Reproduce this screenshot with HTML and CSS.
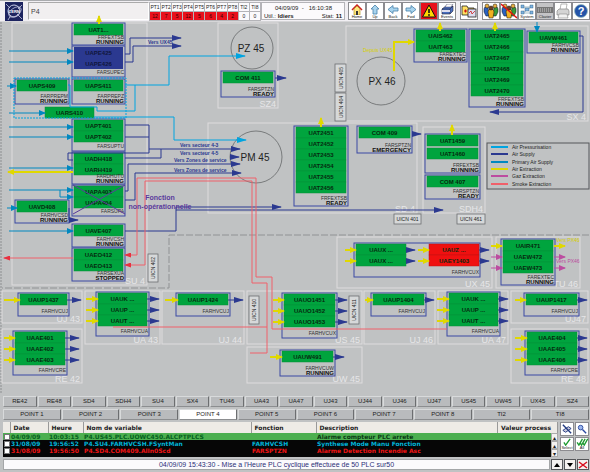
FILE: index.html
```
<!DOCTYPE html>
<html lang="fr">
<head>
  <meta charset="UTF-8" />
  <meta name="viewport" content="width=device-width, initial-scale=1.0" />
  <title>Supervision ventilation - P4</title>
  <link rel="stylesheet" href="styles.css">
</head>
<body>
  <header class="topbar">
    <svg class="logo" viewBox="0 0 18 19">
      <rect width="18" height="19" fill="#1d2460"/>
      <g fill="none" stroke="#c9cde6">
        <circle cx="9" cy="9" r="6"/>
        <ellipse cx="10" cy="10" rx="7" ry="4" transform="rotate(-35 10 10)" stroke-width=".7"/>
        <path d="M1 2 L5 6 M17 3 L13 7 M3 18 L6 13 M17 17 L12 12" stroke-width=".8"/>
      </g>
      <text x="9" y="11" text-anchor="middle" class="logo-text">CERN</text>
    </svg>
    <input class="page-name" type="text" value="P4" aria-label="Synoptique">
    <table class="alarms">
      <tr><th>PT1</th><th>PT2</th><th>PT3</th><th>PT4</th><th>PT5</th><th>PT6</th><th>PT7</th><th>PT8</th><th>TI2</th><th>TI8</th></tr>
      <tr><td class="on">12</td><td class="on">7</td><td class="on">5</td><td class="on">12</td><td class="on">5</td><td class="on">6</td><td class="on">4</td><td class="on">2</td><td>0</td><td>0</td></tr>
    </table>
    <div class="session">
      <div class="clock">04/09/09 &nbsp;- &nbsp; 16:10:38</div>
      <div class="user"><span>Util.: <b>ldiers</b></span><span>Stat: <b>11</b></span></div>
    </div>
    <nav class="toolbar">
      <button type="button">
        <svg viewBox="0 0 16 11"><path d="M3 6 L8 1 L13 6" fill="none" stroke="#c22" stroke-width="1.5"/><path d="M5 5 L8 2 L11 5 V11 H5Z" fill="#ffe680" stroke="#a80" stroke-width=".6"/><rect x="7" y="7" width="2" height="4" fill="#333"/></svg>
        <span>Home</span>
      </button>
      <button type="button">
        <svg viewBox="0 0 16 11"><path d="M8 1 L12 5 H10 V10 H6 V5 H4Z" class="nav-arrow"/></svg>
        <span>Up</span>
      </button>
      <button type="button">
        <svg viewBox="0 0 16 11"><path d="M3 5.500 L8 1.500 V4 H13 V7 H8 V9.500Z" class="nav-arrow"/></svg>
        <span>Back</span>
      </button>
      <button type="button">
        <svg viewBox="0 0 16 11"><path d="M13 5.500 L8 1.500 V4 H3 V7 H8 V9.500Z" class="nav-arrow"/></svg>
        <span>Fwd</span>
      </button>
      <button type="button" class="alert" aria-label="Alarmes">
        <svg viewBox="0 0 16 16"><path d="M8 2 L14.500 14 H1.500Z" fill="#ffd800" stroke="#111" stroke-width="1" stroke-linejoin="round"/><path d="M8 6 V10" stroke="#111" stroke-width="1.600"/><circle cx="8" cy="12" r=".9" fill="#111"/></svg>
      </button>
      <button type="button">
        <svg viewBox="0 0 16 11"><path d="M3 5 L7 2 H14 V7 L11 10 H3Z" fill="#4a6fc0" stroke="#223" stroke-width=".6"/><path d="M3 5 H11 L14 2 M11 5 V10" fill="none" stroke="#223" stroke-width=".6"/><path d="M6 3 L8 0 H14 L12 3Z" fill="#fff" stroke="#446" stroke-width=".5"/><rect x="3" y="6" width="8" height="2" fill="#dde"/></svg>
        <span>Events</span>
      </button>
      <button type="button" class="gap" aria-label="Dossiers">
        <svg viewBox="0 0 16 16"><path d="M1 3 H6 L7 5 H13 V12 H1Z" fill="#ffe060" stroke="#222" stroke-width=".8"/><path d="M3 8 H6 M4.500 6.500 V9.500" stroke="#d01010" stroke-width="1.200"/><rect x="7" y="6" width="8" height="8" fill="#dde" stroke="#222" stroke-width=".8"/><path d="M8 10 L10 8 L11 11 L14 8" fill="none" stroke="#c22" stroke-width=".8"/></svg>
      </button>
      <button type="button" class="gap" aria-label="Utilisateurs">
        <svg viewBox="0 0 16 16"><use href="#people"/></svg>
      </button>
      <button type="button" aria-label="Deconnexion">
        <svg viewBox="0 0 16 16"><use href="#people"/><path d="M0 1 L16 15" stroke="#e01010" stroke-width="1.500"/></svg>
      </button>
      <button type="button">
        <svg viewBox="0 0 16 11"><path d="M4 3 L12 3 L4 9 H12" fill="none" stroke="#8ab" stroke-width=".8"/><g fill="#7fb2e0" stroke="#257" stroke-width=".4"><rect x="2" y="1" width="3" height="3"/><rect x="11" y="1" width="3" height="3"/><rect x="6" y="4" width="4" height="3"/><rect x="2" y="7" width="3" height="3"/><rect x="11" y="7" width="3" height="3"/></g></svg>
        <span>System</span>
      </button>
      <button type="button" class="flat">
        <svg viewBox="0 0 16 11"><rect x="0" y="3" width="16" height="6" fill="#777"/><path d="M1 5 H15 M1 7 H15" stroke="#ccc" stroke-dasharray="1 1"/></svg>
        <span>Clavier</span>
      </button>
      <button type="button" aria-label="Imprimer">
        <svg viewBox="0 0 16 16"><path d="M5 7 L6 1 H12 L11 7Z" fill="#fff" stroke="#888" stroke-width=".6"/><path d="M2 8 L4 6 H13 L14 8 V12 H2Z" fill="#d4d4d4" stroke="#777" stroke-width=".6"/><path d="M4 11 H12 L13 15 H3Z" fill="#f2f2f2" stroke="#888" stroke-width=".6"/></svg>
      </button>
      <button type="button" aria-label="Aide">
        <svg viewBox="0 0 16 16"><circle cx="8" cy="8" r="6.500" fill="#2454a8" stroke="#9bb" stroke-width=".8"/><text x="8" y="12" text-anchor="middle" class="help-mark">?</text></svg>
      </button>
    </nav>
  </header>

  <main>
    <svg class="synoptic" viewBox="0 22 590 372">
      <defs>
        <g id="people" stroke="#111" stroke-width=".5">
          <path d="M1 6 Q1 4 3 4 H5 L6 13 H3 L1 9Z" fill="#2b62c0"/><circle cx="4" cy="3" r="2" fill="#e8b040"/>
          <path d="M15 6 Q15 4 13 4 H11 L10 13 H13 L15 9Z" fill="#3a9a3a"/><circle cx="12" cy="3" r="2" fill="#e8b040"/>
          <path d="M5 9 Q5 6 8 6 Q11 6 11 9 L10 15 H6Z" fill="#f0b020"/><circle cx="8" cy="5" r="2" fill="#704020"/>
        </g>
        <marker id="head-supply" class="head supply" viewBox="0 0 10 6" refX="9" refY="3" markerWidth="10" markerHeight="6" markerUnits="userSpaceOnUse" orient="auto"><path d="M0 0 L10 3 L0 6Z"/></marker>
        <marker id="head-press" class="head press" viewBox="0 0 10 6" refX="9" refY="3" markerWidth="10" markerHeight="6" markerUnits="userSpaceOnUse" orient="auto"><path d="M0 0 L10 3 L0 6Z"/></marker>
        <marker id="head-primary" class="head primary" viewBox="0 0 7 6" refX="6" refY="3" markerWidth="7" markerHeight="6" markerUnits="userSpaceOnUse" orient="auto"><path d="M0 0 L7 3 L0 6Z"/></marker>
        <marker id="head-extract" class="head extract" viewBox="0 0 7 6" refX="6" refY="3" markerWidth="7" markerHeight="6" markerUnits="userSpaceOnUse" orient="auto"><path d="M0 0 L7 3 L0 6Z"/></marker>
        <marker id="head-gas" class="head gas" viewBox="0 0 7 6" refX="6" refY="3" markerWidth="7" markerHeight="6" markerUnits="userSpaceOnUse" orient="auto"><path d="M0 0 L7 3 L0 6Z"/></marker>
        <marker id="head-smoke" class="head smoke" viewBox="0 0 7 5" refX="6" refY="2.500" markerWidth="7" markerHeight="5" markerUnits="userSpaceOnUse" orient="auto"><path d="M0 0 L7 2.500 L0 5Z"/></marker>
      </defs>

      <path class="frame" d="M1 22 V394"/>
      <path class="ground" d="M589 235 H169 V288 H2"/>
      <g id="areas"></g>

      <circle class="shaft" cx="252" cy="48" r="21"/>
      <circle class="shaft" cx="256" cy="157" r="26"/>
      <circle class="shaft" cx="381" cy="81" r="24"/>
      <text class="shaft-name" x="251" y="52">PZ 45</text>
      <text class="shaft-name" x="255" y="161">PM 45</text>
      <text class="shaft-name" x="382" y="85">PX 46</text>

      <g id="units"></g>

      <!-- primary air -->
      <g class="pipe primary">
        <path d="M9 51 H73"/><path d="M9 62 H73"/><path d="M7 86 H16"/><path d="M9 113 H45"/>
        <path d="M9 127 H73"/><path d="M9 137 H73"/><path d="M9 168 H73"/><path d="M9 190 H73"/>
        <path d="M60 190 V197 H73"/><path d="M7 208 H17"/><path d="M9 231 H73"/><path d="M537 22 V32"/>
      </g>

      <!-- pressurisation -->
      <rect class="press-zone" x="14" y="78" width="112" height="40"/>
      <g class="pipe press">
        <path d="M125 85 H169 V56 H245"/>
        <path d="M94 117 H174 V140 H246"/>
      </g>
      <path class="pipe press plain" d="M68 85 H70 V107 H97 V111 H135 V85"/>

      <!-- supply -->
      <g class="pipe supply">
        <path d="M125 54 H130 V38 H181"/><path d="M125 62 H133 V46 H181"/>
        <path d="M149 149 H240"/><path d="M230 157 H239"/>
        <path d="M125 191 H128 V164 H240"/><path d="M125 200 H135 V173 H241"/>
        <path d="M69 208 V220 H78"/><path d="M125 231 H176 V207 H281"/><path d="M176 210 H443"/>
        <path d="M275 78 H286"/><path d="M412 134 H421"/><path d="M579 36 H583 V112 H490"/>
      </g>
      <g class="pipe supply plain">
        <path d="M125 125 H149 V153 H68 V160 H73"/><path d="M125 137 H149"/><path d="M125 158 H161 V149"/>
      </g>

      <!-- extraction -->
      <g class="pipe extract">
        <path d="M99 24 V16"/><path d="M440 31 V23"/><path d="M495 31 V23"/><path d="M321 127 V118"/>
        <path d="M452 135 V125"/><path d="M73 172 H8"/><path d="M394 71 V42 H414"/>
      </g>

      <!-- smoke -->
      <g class="pipe smoke">
        <path d="M73 258 H4"/><path d="M137 255 H125"/><path d="M145 265 H125"/>
      </g>
      <g class="pipe smoke plain">
        <path d="M137 255 V178 H256 V277 H272 V329 H447"/>
        <path d="M145 265 V181 H252 V283 H267 V353 H250"/>
        <path d="M113 327 H267"/>
      </g>

      <path class="crossed" d="M73 185 L125 214 M125 185 L73 214"/>

      <g class="note">
        <text x="148" y="44">Vers UX45</text>
        <text x="180" y="147">Vers secteur 4-3</text>
        <text x="180" y="155">Vers secteur 4-5</text>
        <text x="174" y="162">Vers Zones de service</text>
        <text x="174" y="172">Vers Zones de service</text>
      </g>
      <text class="note-extract" x="363" y="52">Depuis UX45</text>
      <text class="note-extract" x="556" y="242">Vers PX46</text>
      <text class="note-gas" x="556" y="263">Vers PX46</text>
      <text class="warning" x="160" y="200">Fonction</text>
      <text class="warning" x="160" y="209">non-opérationnelle</text>

      <g id="tags"></g>

      <g class="legend">
        <rect x="487" y="143" width="102" height="46"/>
        <path class="press" d="M491 147 H508"/><text x="512" y="149">Air Pressurisation</text>
        <path class="supply" d="M491 154 H508"/><text x="512" y="156">Air Supply</text>
        <path class="primary" d="M491 162 H508"/><text x="512" y="164">Primary Air Supply</text>
        <path class="extract" d="M491 169 H508"/><text x="512" y="171">Air Extraction</text>
        <path class="gas" d="M491 176 H508"/><text x="512" y="178">Gaz Extraction</text>
        <path class="smoke" d="M491 184 H508"/><text x="512" y="186">Smoke Extraction</text>
      </g>
    </svg>

    <nav class="tabs">
      <button type="button">RE42</button><button type="button">RE48</button><button type="button">SD4</button><button type="button">SDH4</button><button type="button">SU4</button><button type="button">SX4</button><button type="button">TU46</button><button type="button">UA43</button><button type="button">UA47</button><button type="button">UJ43</button><button type="button">UJ44</button><button type="button">UJ46</button><button type="button">UJ47</button><button type="button">US45</button><button type="button">UW45</button><button type="button">UX45</button><button type="button">SZ4</button>
    </nav>
    <nav class="tabs">
      <button type="button">POINT 1</button><button type="button">POINT 2</button><button type="button">POINT 3</button><button type="button" class="active">POINT 4</button><button type="button">POINT 5</button><button type="button">POINT 6</button><button type="button">POINT 7</button><button type="button">POINT 8</button><button type="button">TI2</button><button type="button">TI8</button>
    </nav>
  </main>

  <section class="events">
    <div class="events-list">
      <table>
        <colgroup><col class="c-check"><col class="c-date"><col class="c-hour"><col class="c-name"><col class="c-func"><col class="c-desc"><col class="c-value"></colgroup>
        <thead>
          <tr><th></th><th>Date</th><th>Heure</th><th>Nom de variable</th><th>Fonction</th><th>Description</th><th>Valeur process</th></tr>
        </thead>
        <tbody>
          <tr class="ack"><td><input type="checkbox" aria-label="Alarme 1"></td><td>04/09/09</td><td>10:03:15</td><td>P4.US45.PLC.UOWC450.ALCPTPLCS</td><td></td><td>Alarme compteur PLC arrete</td><td></td></tr>
          <tr class="info"><td><input type="checkbox" aria-label="Alarme 2"></td><td>31/08/09</td><td>19:56:52</td><td>P4.SU4.FARHVCSH.FSyntMan</td><td>FARHVCSH</td><td>Synthese Mode Manu Fonction</td><td></td></tr>
          <tr class="fault"><td><input type="checkbox" aria-label="Alarme 3"></td><td>31/08/09</td><td>19:56:50</td><td>P4.SD4.COM409.AlIn0Scd</td><td>FARSPTZN</td><td>Alarme Detection Incendie Asc</td><td></td></tr>
        </tbody>
      </table>
      <div class="scroll"><button type="button">▴</button><button type="button">▴</button><button type="button">▾</button></div>
    </div>
    <div class="events-tools">
      <button type="button" aria-label="Masquer"><svg viewBox="0 0 13 13"><path d="M2 8 L8 4 L11 6 L5 10Z" fill="#ccd" stroke="#223a80"/><path d="M2 2 L11 11" stroke="#223a80" stroke-width="1.500"/></svg></button>
      <button type="button" aria-label="Chercher"><svg viewBox="0 0 13 13"><circle cx="5" cy="5" r="2.500" fill="#9db8ee" stroke="#2848a0"/><path d="M7 7 L11 11" stroke="#2848a0" stroke-width="1.500"/></svg></button>
      <button type="button"><svg viewBox="0 0 13 9"><path d="M3 5 L5 8 L10 1" class="tick"/></svg><span>Select</span></button>
      <button type="button"><svg viewBox="0 0 13 9"><path d="M1 5 L3 8 L7 1 M4 5 L6 8 L10 1 M7 5 L9 8 L13 1" class="tick"/></svg><span>All</span></button>
    </div>
  </section>

  <footer class="status">
    <output>04/09/09 15:43:30 - Mise a l'Heure PLC cyclique effectuee de 50 PLC sur50</output>
    <button type="button" aria-label="Precedent"><svg viewBox="0 0 10 8"><path d="M5 2 L8 6 H2Z"/></svg></button>
    <button type="button" aria-label="Suivant"><svg viewBox="0 0 10 8"><path d="M5 6 L8 2 H2Z"/></svg></button>
    <button type="button" aria-label="Effacer"><svg viewBox="0 0 10 8"><path d="M1 1 L9 7 M9 1 L1 7" stroke="#d81020" stroke-width="1.500"/></svg></button>
  </footer>

  <script src="script.js"></script>
</body>
</html>
```
FILE: styles.css
```
* {
  box-sizing: border-box;
}

body {
  margin: 0;
  background: #c0c2c3;
  color: #222;
  font-family: "Liberation Sans", Arial, sans-serif;
  font-size: 6px;
}

button {
  font: inherit;
  color: inherit;
  padding: 0;
  margin: 0;
  border-radius: 0;
  cursor: pointer;
}

/* top bar */
.topbar {
  display: flex;
  align-items: center;
  height: 22px;
  padding-left: 5px;
  background: #f1eff3;
  border-top: 1px solid #a9abae;
  border-bottom: 1px solid #d6d6d8;
}

.logo {
  width: 18px;
  height: 19px;
  margin-right: 5px;
}

.logo-text {
  font-size: 4px;
  font-weight: bold;
  fill: #fff;
}

.page-name {
  flex: 1;
  min-width: 0;
  height: 18px;
  padding: 0 2px;
  border: 1px solid #fff;
  border-top-color: #aaa;
  border-left-color: #aaa;
  background: #f1eff0;
  color: #444;
  font-family: inherit;
  font-size: 7px;
}

.alarms {
  width: 112px;
  table-layout: fixed;
  border-collapse: collapse;
  font-size: 5px;
  text-align: center;
}

.alarms th,
.alarms td {
  height: 9px;
  padding: 0;
  border: 1px solid #b4b4b8;
  font-weight: normal;
  background: #fbfafc;
}

.alarms .on {
  background: #e8101c;
  color: #300;
}

.session {
  width: 84px;
  height: 18px;
  padding: 1px 2px;
  line-height: 8px;
  background: #fbfafc;
  border: 1px solid #b4b4b8;
}

.clock {
  padding-left: 11px;
  white-space: pre;
}

.user {
  display: flex;
  justify-content: space-between;
}

.toolbar {
  display: flex;
  margin-left: 3px;
}

.toolbar button {
  display: flex;
  flex-direction: column;
  align-items: center;
  justify-content: center;
  width: 18px;
  height: 18px;
  border: 1px solid #8c8c90;
  background: #fff;
  font-size: 4px;
  line-height: 4px;
}

.toolbar svg {
  display: block;
  width: 16px;
}

.toolbar .gap {
  margin-left: 4px;
}

.toolbar .alert {
  background: #e8101c;
}

.toolbar .flat {
  background: #c4c4c6;
}

.nav-arrow {
  fill: #a8d4ee;
  stroke: #4880a8;
  stroke-width: 0.8;
}

.help-mark {
  font-size: 11px;
  font-weight: bold;
  fill: #fff;
}

/* synoptic */
.synoptic {
  display: block;
  width: 100%;
  overflow: visible;
}

.frame {
  stroke: #8c8e90;
  stroke-dasharray: 2 1;
}

.ground {
  fill: none;
  stroke: #909294;
  stroke-dasharray: 7 2;
}

.area {
  fill: none;
  stroke: #dedcde;
}

.area-name {
  font-size: 9px;
  fill: #e6e6e8;
  text-anchor: end;
}

.shaft {
  fill: none;
  stroke: #66686a;
  stroke-width: 0.8;
}

.shaft-name {
  font-size: 10px;
  fill: #222;
  text-anchor: middle;
}

.unit {
  fill: none;
  stroke: #3a48a4;
}

.cell {
  fill: #00a43e;
  stroke: #079038;
  stroke-width: 0.5;
}

.cell.idle {
  fill: #2b3990;
  stroke: none;
}

.cell.fault {
  fill: #f01010;
  stroke: #c01010;
}

.cell-name {
  font-size: 6px;
  font-weight: bold;
  fill: #06290f;
  text-anchor: middle;
}

.idle + .cell-name {
  fill: #10163c;
}

.plc {
  font-size: 5px;
  fill: #333;
  text-anchor: end;
}

.state {
  font-size: 6px;
  font-weight: bold;
  fill: #111;
  text-anchor: end;
}

.press { stroke: #00a4e0; }
.supply { stroke: #2b3990; }
.primary { stroke: #0088c0; }
.extract { stroke: #e0d800; }
.gas { stroke: #bc4ca0; }
.smoke { stroke: #f0606a; }

.head { stroke: none; }
.head.press { fill: #00a4e0; }
.head.supply { fill: #2b3990; }
.head.primary { fill: #0088c0; }
.head.extract { fill: #e0d800; }
.head.gas { fill: #bc4ca0; }
.head.smoke { fill: #e83040; }

.pipe {
  fill: none;
}

.pipe.press path { marker-end: url(#head-press); }
.pipe.supply path { marker-end: url(#head-supply); }
.pipe.primary path { marker-end: url(#head-primary); }
.pipe.extract path { marker-end: url(#head-extract); }
.pipe.gas path { marker-end: url(#head-gas); }
.pipe.smoke path { marker-end: url(#head-smoke); }
.pipe.plain path { marker-end: none; }

.press-zone {
  fill: none;
  stroke: #00a4e0;
  stroke-dasharray: 2 1;
}

.pipe.extract {
  stroke-width: 2;
}

.crossed {
  stroke: #5a3a9c;
  stroke-width: 1;
}

.note {
  font-size: 5px;
  font-weight: bold;
  fill: #2b3990;
}

.note-extract,
.note-gas {
  font-size: 5px;
  fill: #d8d000;
}

.note-gas {
  fill: #bc4ca0;
}

.warning {
  font-size: 7px;
  font-weight: bold;
  fill: #5a3a9c;
  text-anchor: middle;
}

.tag {
  fill: #d6d8d9;
  stroke: #6c6e70;
  stroke-width: 0.8;
}

.tag-name {
  font-size: 5px;
  fill: #222;
  text-anchor: middle;
}

.legend rect {
  fill: none;
  stroke: #55575a;
}

.legend path {
  stroke-width: 2;
}

.legend text {
  font-size: 5px;
  fill: #222;
}

/* area and point tabs */
.tabs {
  display: flex;
  gap: 1px;
  padding: 2px 1px 0 3px;
}

.tabs button {
  flex: 1 1 0;
  min-width: 0;
  height: 11px;
  border: 1px solid #d8dadb;
  border-right-color: #6c6e70;
  border-bottom-color: #8c8e90;
  background: #b9bbbd;
  line-height: 9px;
}

.tabs .active {
  background: #fff;
}

/* event list */
.events {
  display: flex;
  gap: 2px;
  padding: 2px 1px 0 3px;
}

.events-list {
  position: relative;
  flex: 1;
  height: 35px;
  background: #060606;
  font-family: "DejaVu Sans", Verdana, sans-serif;
}

.events-list table {
  width: 100%;
  table-layout: fixed;
  border-collapse: collapse;
  font-weight: bold;
  text-align: left;
  white-space: nowrap;
}

.events-list th {
  height: 11px;
  padding: 0 3px;
  background: #eeebe6;
  border-right: 1px solid #999;
}

.events-list td {
  height: 7px;
  padding: 0 1px;
  line-height: 7px;
}

.events-list input {
  appearance: none;
  display: block;
  width: 6px;
  height: 6px;
  margin: 0;
  background: #fff;
  border: 1px solid #777;
}

.c-check { width: 7px; }
.c-date { width: 38px; }
.c-hour { width: 35px; }
.c-name { width: 168px; }
.c-func { width: 65px; }
.c-value { width: 60px; }

.ack { background: #4caf50; color: #04601c; }
.ack td:nth-child(6) { color: #0a3a14; }
.info { color: #00b4d8; }
.fault { color: #f01414; }

.scroll {
  position: absolute;
  right: 0;
  top: 11px;
  bottom: 0;
  width: 7px;
  display: flex;
  flex-direction: column;
  background: #e4e2e0;
}

.scroll button {
  flex: 1;
  border: 1px solid #aaa;
  background: #f4f2f0;
  line-height: 5px;
}

.events-tools {
  display: grid;
  grid-template-columns: 14px 14px;
  grid-auto-rows: 14px;
  gap: 1px;
}

.events-tools button {
  display: flex;
  flex-direction: column;
  align-items: center;
  justify-content: center;
  border: 1px solid #8c8c90;
  background: #fff;
  font-size: 4px;
  line-height: 4px;
}

.events-tools svg {
  display: block;
  width: 12px;
}

.tick {
  fill: none;
  stroke: #1c9a30;
  stroke-width: 1.5;
}

/* status line */
.status {
  display: flex;
  gap: 1px;
  padding: 2px 1px 1px 3px;
}

.status output {
  flex: 1;
  height: 11px;
  line-height: 9px;
  text-align: center;
  color: #2b2f78;
  font-size: 7px;
  background: #fbfafc;
  border: 1px solid #a4a6a8;
}

.status button {
  width: 12px;
  height: 11px;
  border: 1px solid #55575a;
  background: #f4f2f0;
}

.status svg {
  display: block;
  width: 10px;
  height: 8px;
}
```
FILE: script.js
```
const NS = "http://www.w3.org/2000/svg";

function add(parent, tag, attrs, text) {
  const el = document.createElementNS(NS, tag);
  for (const key in attrs) el.setAttribute(key, attrs[key]);
  if (text) el.textContent = text;
  parent.appendChild(el);
  return el;
}

// name, left, top, right, bottom
const areas = [
  ["SU 4", 12, 23, 147, 285], ["SZ4", 218, 23, 278, 108], ["SX 4", 346, 26, 588, 121],
  ["SD 4", 208, 123, 417, 213], ["SDH4", 423, 127, 485, 213],
  ["UX 45", 337, 237, 492, 288], ["TU 46", 496, 237, 580, 288],
  ["UJ 43", 2, 291, 82, 323], ["UA 43", 85, 291, 160, 344], ["UJ 44", 162, 291, 244, 344],
  ["US 45", 247, 291, 362, 344], ["UJ 46", 364, 291, 435, 344], ["UA 47", 438, 291, 508, 344],
  ["UJ47", 511, 291, 588, 323], ["RE 42", 2, 329, 82, 383], ["UW 45", 247, 347, 362, 383],
  ["RE 48", 511, 329, 588, 383]
];

// box: left, top, right, bottom - in/out: start and end of the small arrows
const units = [
  { box: [72, 23, 125, 45], cells: ["UAT1..."], plc: "FRFEXTSB", state: "RUNNING" },
  { box: [72, 46, 125, 77], cells: ["UAPE425", "UAPE426"], plc: "FARSUPEC", kind: "idle" },
  { box: [15, 79, 69, 104], cells: ["UAPS409"], plc: "FARPREPM", state: "RUNNING" },
  { box: [72, 79, 125, 104], cells: ["UAPS411"], plc: "FARPREPZ", state: "RUNNING" },
  { box: [72, 119, 125, 151], cells: ["UAPT401", "UAPT402"], plc: "FARSUPTU" },
  { box: [72, 152, 125, 184], cells: ["UADH418", "UARH419"], plc: "FARDHUTU", state: "RUNNING" },
  { box: [72, 185, 125, 216], cells: ["UAPA403", "UAPA404"], plc: "FARSUPA" },
  { box: [15, 200, 69, 223], cells: ["UAVD408"], plc: "FARHVCSD", state: "RUNNING" },
  { box: [72, 224, 125, 247], cells: ["UAVE407"], plc: "FARHVCSH", state: "RUNNING" },
  { box: [72, 248, 125, 281], cells: ["UAEO412", "UAEO413"], plc: "FARSEXUA", state: "STOPPED" },
  { box: [221, 71, 275, 97], cells: ["COM 411"], plc: "FARSPTZN", state: "READY" },
  { box: [414, 29, 467, 62], cells: ["UAIS462", "UAIT463"], plc: "FAREXTEC", state: "RUNNING" },
  { box: [469, 29, 525, 107], cells: ["UAT2465", "UAT2466", "UAT2467", "UAT2468", "UAT2469", "UAT2470"], plc: "FRFEXTSB", state: "RUNNING" },
  { box: [527, 31, 580, 53], cells: ["UAVW461"], plc: "FARHVCSB", state: "RUNNING" },
  { box: [294, 126, 348, 206], cells: ["UAT2451", "UAT2452", "UAT2453", "UAT2454", "UAT2455", "UAT2456"], plc: "FRFEXTSB", state: "READY" },
  { box: [357, 126, 412, 153], cells: ["COM 409"], plc: "FARSPTZN", state: "EMERGENCY" },
  { box: [425, 134, 480, 173], cells: ["UAT1459", "UAT1460"], plc: "FRFEXTSB", state: "RUNNING", step: 13 },
  { box: [425, 175, 480, 199], cells: ["COM 407"], plc: "FARSPTZN", state: "READY" },
  { box: [354, 243, 480, 277], cells: ["UAUX ...", "UAUX ..."], width: 50, plc: "FARHVCUX", in: 345, out: 415, outFrom: 406 },
  { box: [501, 239, 555, 285], cells: ["UAIR471", "UAEW472", "UAEW473"], plc: "FAREXTEC", state: "RUNNING" },
  { box: [18, 293, 69, 316], cells: ["UAUP1437"], plc: "FARHVCUJ", in: 4, out: 81 },
  { box: [96, 292, 149, 336], cells: ["UAUK ...", "UAUP ...", "UAUT ..."], plc: "FARHVCUA", in: 86, out: 159 },
  { box: [176, 293, 230, 316], cells: ["UAUP1424"], plc: "FARHVCUJ", in: 165, out: 243 },
  { box: [282, 293, 337, 338], cells: ["UAUO1451", "UAUO1452", "UAUO1453"], plc: "FARHVCUX", in: 273, out: 347 },
  { box: [371, 293, 426, 316], cells: ["UAUP1404"], plc: "FARHVCUJ", in: 365, out: 434 },
  { box: [447, 292, 500, 336], cells: ["UAUK ...", "UAUP ...", "UAUT ..."], plc: "FARHVCUA", in: 437, out: 508 },
  { box: [524, 293, 579, 316], cells: ["UAUP1417"], plc: "FARHVCUJ", in: 515, out: 587 },
  { box: [13, 331, 67, 375], cells: ["UAAE401", "UAAE402", "UAAE403"], plc: "FARHVCRE", in: 4, out: 79 },
  { box: [280, 350, 335, 376], cells: ["UAUW491"], plc: "FARHVCUW", state: "RUNNING", in: 270, out: 344 },
  { box: [525, 331, 579, 375], cells: ["UAAE404", "UAAE405", "UAAE406"], plc: "FARHVCRE", in: 515, out: 587 }
];

const tags = [
  ["UICN 405", 335, 64, 11, 28], ["UICN 404", 335, 93, 11, 28], ["UICN 402", 148, 254, 10, 28],
  ["UICN 410", 249, 296, 10, 28], ["UICN 411", 349, 296, 10, 28],
  ["UICN 401", 394, 214, 27, 10], ["UICN 461", 457, 214, 28, 10]
];

const areaLayer = document.getElementById("areas");
const unitLayer = document.getElementById("units");
const tagLayer = document.getElementById("tags");

function drawCell(name, x, y, width, kind) {
  add(unitLayer, "rect", { class: "cell " + (kind || ""), x, y, width, height: 11 });
  add(unitLayer, "text", { class: "cell-name", x: x + width / 2, y: y + 8 }, name);
}

function drawArrow(kind, x1, x2, y) {
  const g = add(unitLayer, "g", { class: "pipe " + kind });
  add(g, "path", { d: `M${x1} ${y} H${x2}` });
}

areas.forEach(([name, x1, y1, x2, y2]) => {
  add(areaLayer, "rect", { class: "area", x: x1, y: y1, width: x2 - x1, height: y2 - y1 });
  add(areaLayer, "text", { class: "area-name", x: x2 - 2, y: y2 - 1 }, name);
});

units.forEach(unit => {
  const [x1, y1, x2, y2] = unit.box;
  add(unitLayer, "rect", { class: "unit", x: x1, y: y1, width: x2 - x1, height: y2 - y1 });
  unit.cells.forEach((name, i) => {
    const y = y1 + 1 + i * (unit.step || 11);
    drawCell(name, x1 + 2, y, unit.width || x2 - x1 - 4, unit.kind);
    if (unit.in) drawArrow("extract", unit.in, x1 + 2, y + 6);
    if (unit.out) drawArrow("supply", unit.outFrom || x2 - 2, unit.out, y + 6);
  });
  add(unitLayer, "text", { class: "plc", x: x2 - 1, y: unit.state ? y2 - 6 : y2 - 3 }, unit.plc);
  if (unit.state) add(unitLayer, "text", { class: "state", x: x2 - 1, y: y2 - 1 }, unit.state);
});

// UARS410 stands alone, without a box
drawCell("UARS410", 45, 107, 49);

// second bank of UX 45
drawCell("UAUZ ...", 429, 244, 50, "fault");
drawCell("UAEY1403", 429, 255, 50, "fault");
[250, 261].forEach(y => {
  drawArrow("extract", 418, 429, y);
  drawArrow("supply", 479, 489, y);
});

// TU 46 inlets and outlets
["extract", "gas", "gas"].forEach((kind, i) => {
  drawArrow(kind, 491, 502, 246 + i * 11);
  drawArrow(kind, 554, 565, 246 + i * 11);
});

tags.forEach(([name, x, y, width, height]) => {
  add(tagLayer, "rect", { class: "tag", x, y, width, height });
  const cx = x + width / 2;
  const cy = y + height / 2;
  const attrs = { class: "tag-name", x: cx, y: cy + 2 };
  if (height > width) attrs.transform = `rotate(-90 ${cx} ${cy})`;
  add(tagLayer, "text", attrs, name);
});
```
